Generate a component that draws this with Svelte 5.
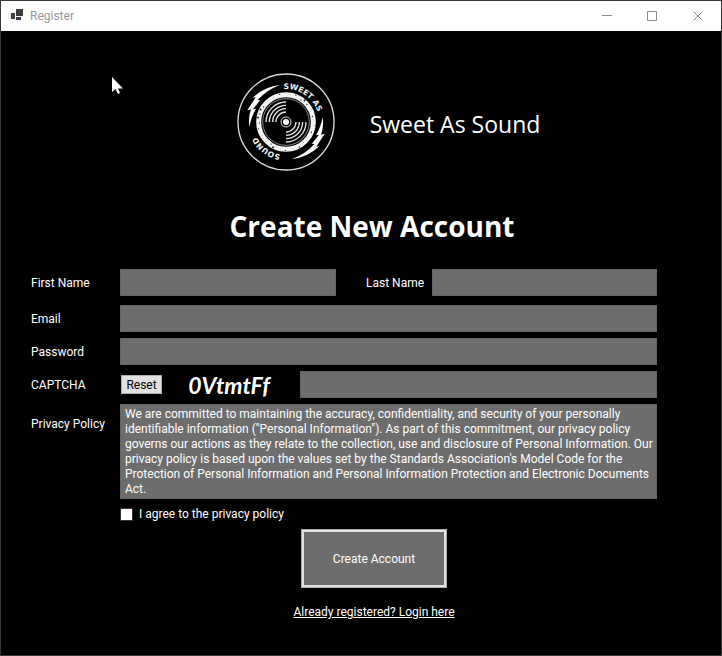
<script>
  let firstName = $state('');
  let lastName = $state('');
  let email = $state('');
  let password = $state('');
  let answer = $state('');
  let agreed = $state(false);

  const captcha = '0VtmtFf';
  const policy = [
    'We are committed to maintaining the accuracy, confidentiality, and security of your personally',
    'identifiable information ("Personal Information"). As part of this commitment, our privacy policy',
    'governs our actions as they relate to the collection, use and disclosure of Personal Information. Our',
    "privacy policy is based upon the values set by the Standards Association's Model Code for the",
    'Protection of Personal Information and Personal Information Protection and Electronic Documents',
    'Act.'
  ].join('\n');

  // worn specks on the record's rim: angle in degrees, radius, size
  const specks = [
    [8, 84, 1], [20, 86, 2], [34, 80, 2], [41, 85, 3], [50, 82, 2], [63, 85, 1], [78, 81, 2],
    [97, 86, 1], [112, 82, 2], [139, 81, 1], [152, 85, 2], [166, 82, 1], [181, 85, 2],
    [207, 85, 3], [214, 80, 2], [226, 86, 1], [241, 82, 1], [256, 85, 2], [268, 80, 2],
    [279, 85, 3], [287, 82, 2], [296, 85, 3], [304, 81, 2], [333, 82, 1], [347, 85, 2]
  ].map(([a, r, s]) => ({
    x: 165 + r * Math.sin((a * Math.PI) / 180),
    y: 165 - r * Math.cos((a * Math.PI) / 180),
    s
  }));
  const grooves = [30, 40, 50, 60];
</script>

<div class="window">
  <header class="titlebar">
    <svg class="app-icon" width="12" height="12" viewBox="0 0 12 12" aria-hidden="true">
      <path d="M0 4h4v6H0zM5 0h7v7H5zM5 8h5v3H5z" fill="#3c3c3c" />
    </svg>
    <span class="caption">Register</span>
    <button class="control" type="button" aria-label="Minimize">
      <svg width="11" height="11" viewBox="0 0 11 11"><path d="M1 4.5h10" /></svg>
    </button>
    <button class="control" type="button" aria-label="Maximize">
      <svg width="11" height="11" viewBox="0 0 11 11"><path d="M.5.5h9v9h-9z" /></svg>
    </button>
    <button class="control" type="button" aria-label="Close">
      <svg width="11" height="11" viewBox="0 0 11 11"><path d="M.5.5l9 9M9.5.5l-9 9" /></svg>
    </button>
  </header>

  <main>
    <div class="brand">
      <svg class="logo" width="100" height="100" viewBox="15 15 300 300" aria-hidden="true">
        <defs>
          <path id="rim" d="M156 66.400A99 99 0 0 1 174 263.600A99 99 0 0 1 156 66.400" />
        </defs>
        <circle cx="165" cy="165" r="144" fill="none" stroke="#ddd" stroke-width="4" />
        <circle cx="165" cy="165" r="82" fill="none" stroke="#f4f4f4" stroke-width="15" />
        {#each specks as p}
          <circle cx={p.x} cy={p.y} r={p.s} fill="#222" />
        {/each}
        <circle cx="165" cy="165" r="70" fill="none" stroke="#ccc" stroke-width="2" />
        {#each grooves as r}
          <path
            d="M{165 - r} 165A{r} {r} 0 0 1 165 {165 - r}M{165 + r} 165A{r} {r} 0 0 1 165 {165 + r}"
            fill="none"
            stroke="#e4e4e4"
            stroke-width="4"
          />
        {/each}
        <circle cx="165" cy="165" r="15" fill="none" stroke="#ddd" stroke-width="3" />
        <circle cx="165" cy="165" r="9" fill="#fff" />
        <g fill="#fff">
          <path d="M147 54Q101 58 65 92L74 91L49 130L60 127Q51 152 55 180Q60 151 75 125L66 127L88 99L79 100Q108 68 147 54Z" />
          <path d="M183 276Q229 272 265 238L256 239L281 200L270 203Q279 178 275 150Q270 179 255 205L264 203L242 231L251 230Q222 262 183 276Z" />
        </g>
        <text class="rim-text"><textPath href="#rim" startOffset="2">SWEET AS</textPath></text>
        <text class="rim-text"><textPath href="#rim" startOffset="336">SOUND</textPath></text>
      </svg>
      <span class="brand-name">Sweet As Sound</span>
    </div>

    <h1>Create New Account</h1>

    <form onsubmit={(e) => e.preventDefault()}>
      <div class="row names">
        <label for="first">First Name</label>
        <input id="first" class="first" type="text" bind:value={firstName} />
        <label for="last" class="last-label">Last Name</label>
        <input id="last" type="text" bind:value={lastName} />
      </div>
      <div class="row">
        <label for="email">Email</label>
        <input id="email" type="text" bind:value={email} />
      </div>
      <div class="row">
        <label for="password">Password</label>
        <input id="password" type="password" bind:value={password} />
      </div>
      <div class="row">
        <label for="captcha">CAPTCHA</label>
        <div class="challenge">
          <button class="reset" type="button" onclick={() => (answer = '')}>Reset</button>
          <span class="code">{captcha}</span>
        </div>
        <input id="captcha" type="text" bind:value={answer} />
      </div>
      <div class="row policy">
        <label for="policy">Privacy Policy</label>
        <textarea id="policy" rows="6" readonly value={policy}></textarea>
      </div>
      <div class="agree">
        <input id="agree" type="checkbox" bind:checked={agreed} />
        <label for="agree">I agree to the privacy policy</label>
      </div>
      <div class="actions">
        <button class="create" type="submit">Create Account</button>
        <a href="#login">Already registered? Login here</a>
      </div>
    </form>
  </main>

  <svg class="pointer" width="12" height="18" viewBox="0 0 12 18" aria-hidden="true">
    <path d="M1 1v15l3.500-3 2.500 5 2-1-2-4.500H12z" fill="#fff" />
  </svg>
</div>

<style>
  :global(body) {
    margin: 0;
    background: #000;
  }

  .window {
    position: relative;
    box-sizing: border-box;
    min-height: 100vh;
    border: 1px solid #38383b;
    background: #000;
    color: #fff;
    font: 12px/15px Roboto, 'Open Sans', sans-serif;
  }

  .titlebar {
    display: flex;
    align-items: center;
    height: 30px;
    padding-left: 10px;
    background: #fff;
    color: #999;
  }

  .app-icon {
    margin: 0 7px 2px 0;
  }

  .caption {
    flex: 1;
  }

  .control {
    display: flex;
    align-items: center;
    justify-content: center;
    width: 46px;
    height: 28px;
    padding: 0;
    border: 0;
    background: none;
  }

  .control path {
    fill: none;
    stroke: #8c8c8c;
  }

  main {
    padding: 41px 64px 24px 30px;
  }

  .brand {
    display: flex;
    align-items: center;
    justify-content: center;
    gap: 34px;
    padding-left: 88px;
  }

  .brand-name {
    padding-top: 4px;
    font: 23px/32px 'Open Sans', 'Noto Sans', sans-serif;
  }

  .rim-text {
    fill: #f2f2f2;
    font: bold 23px 'DejaVu Sans', sans-serif;
  }

  h1 {
    margin: 34px 0 23px;
    padding-left: 56px;
    font: 700 28px/40px 'Open Sans', 'Noto Sans', sans-serif;
    text-align: center;
  }

  form {
    display: flex;
    flex-direction: column;
    gap: 6px;
  }

  .row {
    display: flex;
    align-items: center;
  }

  .names {
    margin-bottom: 3px;
  }

  .row > label {
    flex: none;
    width: 89px;
    padding-top: 2px;
  }

  .row > .last-label {
    width: 66px;
    margin-left: 30px;
  }

  .row > input,
  textarea {
    flex: 1;
    box-sizing: border-box;
    min-width: 0;
    height: 27px;
    padding: 1px 4px;
    border: 1px solid #646464;
    border-radius: 0;
    outline: 0;
    background: #6d6d6d;
    color: #fff;
    font: inherit;
  }

  .row > .first {
    flex: 0 1 216px;
  }

  .challenge {
    display: flex;
    align-items: center;
    flex: none;
    width: 180px;
  }

  .reset {
    width: 41px;
    height: 19px;
    margin-left: 1px;
    padding: 2px 0 0;
    border: 1px solid #adadad;
    background: #e1e1e1;
    color: #000;
    font: inherit;
  }

  .code {
    flex: 1;
    padding-right: 4px;
    font: italic 700 23px/26px Lato, sans-serif;
    text-align: center;
  }

  .policy {
    align-items: flex-start;
  }

  .policy > label {
    padding-top: 13px;
  }

  textarea {
    height: auto;
    padding-top: 2px;
    resize: none;
    overflow: hidden;
    white-space: pre;
  }

  .agree {
    display: flex;
    align-items: center;
    gap: 6px;
    height: 18px;
    padding-left: 89px;
  }

  .agree input {
    appearance: none;
    width: 13px;
    height: 13px;
    margin: 0;
    border: 1px solid #333;
    background: #fff;
  }

  .agree input:checked {
    background: #6d6d6d;
  }

  .actions {
    display: flex;
    flex-direction: column;
    align-items: center;
    gap: 17px;
    padding-left: 60px;
  }

  .create {
    width: 146px;
    height: 59px;
    padding-top: 2px;
    border: 1px solid #adadad;
    box-shadow: inset 0 0 0 2px #e1e1e1;
    background: #6d6d6d;
    color: #fff;
    font: inherit;
  }

  a {
    color: #fff;
    text-decoration: underline;
  }

  .pointer {
    position: absolute;
    top: 75px;
    left: 110px;
  }
</style>
